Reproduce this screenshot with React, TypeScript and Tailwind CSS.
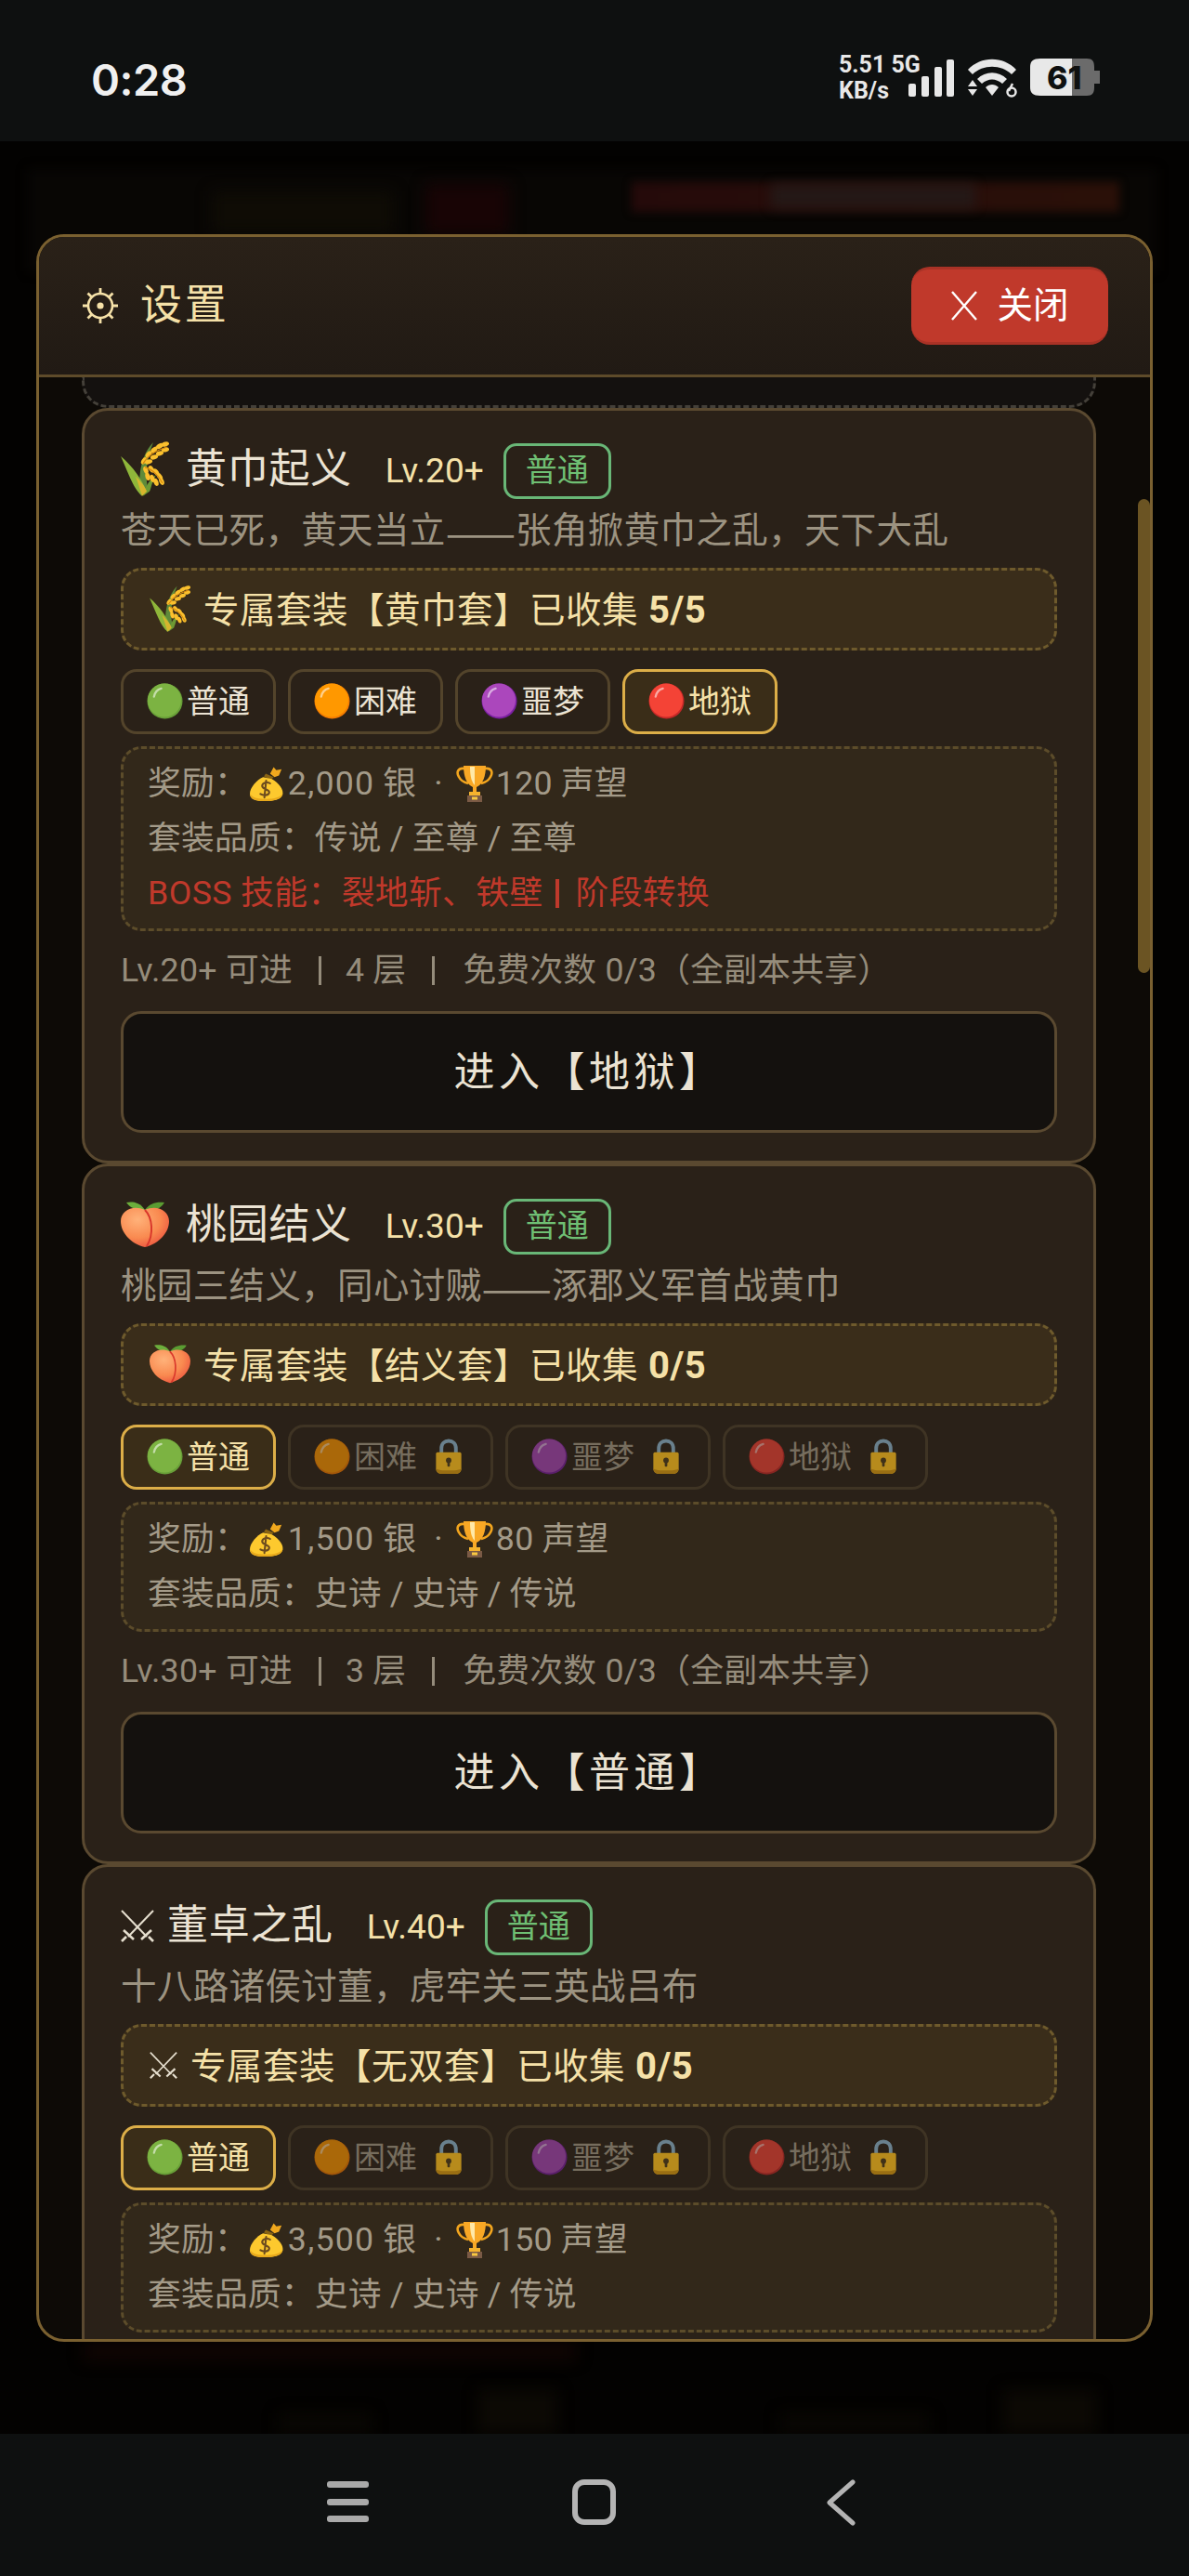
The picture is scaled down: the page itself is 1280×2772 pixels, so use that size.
import React from "react";

const FONT = "font-['Roboto','Noto_Sans_CJK_SC',sans-serif]";
const CJK = "font-['Noto_Sans_CJK_SC',sans-serif]";

function Ball({ fill, rim }: { fill: string; rim: string }) {
  return (
    <svg viewBox="0 0 40 40" className="inline-block w-[39px] h-[39px] shrink-0">
      <circle cx="20" cy="20" r="19.5" fill={rim} />
      <circle cx="19.5" cy="19" r="18.5" fill={fill} />
      <path d="M8 15 C9 10 12 7 16 6" stroke="#ffffff" strokeOpacity="0.55" strokeWidth="2.4" strokeLinecap="round" fill="none" />
    </svg>
  );
}

function Lock() {
  return (
    <svg viewBox="0 0 30 40" className="inline-block w-[30px] h-[39px] shrink-0">
      <path d="M7 18 V11 C7 5.5 10.5 2.5 15 2.5 C19.5 2.5 23 5.5 23 11 V18" fill="none" stroke="#84a9bf" strokeWidth="4" />
      <path d="M1 17 C1 15.5 2 15 3.5 15 H26.5 C28 15 29 15.5 29 17 V33 C29 37 26 39 22 39 H8 C4 39 1 37 1 33 Z" fill="#f3b91f" />
      <path d="M1 33 C1 37 4 39 8 39 H22 C26 39 29 37 29 33 C26 36 4 36 1 33 Z" fill="#c98f12" />
      <circle cx="15" cy="24" r="3" fill="#4a3a1a" />
      <rect x="13.6" y="24" width="2.8" height="7" rx="1" fill="#4a3a1a" />
    </svg>
  );
}

function Bag() {
  return (
    <svg viewBox="0 0 40 40" className="inline-block w-[38px] h-[40px] shrink-0">
      <path d="M24 9 L28 1.5 L31 5 L37 4 L34 11 L29 13 Z" fill="#f0a81e" />
      <path d="M19 9 L28 13 L25 16 L17 12 Z" fill="#8a6414" />
      <path d="M16 13 L26 15 C34 20 40 27 38 33 C36 39 28 40 18 40 C8 40 1 38 1 32 C1 25 9 16 16 13 Z" fill="#fdc92e" />
      <path d="M1.5 31 C3 37 12 37.5 20 37.5 C28 37.5 36 36 38.5 31 C38 38 28 40 18 40 C8 40 1 38 1.5 31 Z" fill="#e8a91b" />
      <path d="M24 20 C21 18 15 19 15 23 C15 27 23 26 23 30 C23 34 16 34 13 32 M19.5 17 L17.5 36" fill="none" stroke="#6d4c1e" strokeWidth="2.2" strokeLinecap="round" />
    </svg>
  );
}

function Trophy() {
  return (
    <svg viewBox="0 0 40 40" className="inline-block w-[40px] h-[40px] shrink-0">
      <path d="M9 4 C2 3 0 8 3 13 C5 17 9 19 13 20" fill="none" stroke="#f2a51e" strokeWidth="2.6" />
      <path d="M31 4 C38 3 40 8 37 13 C35 17 31 19 27 20" fill="none" stroke="#f2a51e" strokeWidth="2.6" />
      <path d="M8 1 H32 C32 12 29 21 22 24 H18 C11 21 8 12 8 1 Z" fill="#f9a825" />
      <path d="M15 2 H20 C20 10 20 17 20 22 C16 18 15 10 15 2 Z" fill="#ffe9a8" />
      <rect x="18" y="24" width="4" height="6" fill="#f9a825" />
      <rect x="14" y="29" width="12" height="4" fill="#f5b32e" />
      <rect x="12" y="33" width="16" height="7" fill="#7a5a45" />
      <rect x="17" y="34.5" width="6" height="3" fill="#f9c842" />
    </svg>
  );
}

const UPPER = [
  [25, 21, -55], [30, 14, -50], [36, 9, -40], [42, 5, -30], [48, 3, -15],
  [30, 22, -15], [36, 17, -15], [42, 13, -15], [48, 9, -10],
];
const LOWER = [
  [27, 31, 70], [33, 30, 55], [38, 33, 50], [42, 38, 55], [44, 43, 65],
  [29, 38, 75], [34, 40, 70], [38, 44, 70],
];

function Rice({ size }: { size: number }) {
  return (
    <svg viewBox="0 0 52 60" className="inline-block shrink-0" style={{ width: size, height: size * 1.15 }}>
      <path d="M22 59 C18 44 20 16 35 1 C28 18 26 36 29 50 Z" fill="#5f8a3a" />
      <path d="M24 59 C26 50 30 42 38 36 C33 45 33 50 31 54 Z" fill="#6d9a34" />
      <path d="M23 59 C14 52 8 34 0 16 C12 26 22 40 28 54 Z" fill="#8fb63a" />
      <path d="M23 59 C20 50 19 46 16 38 C20 42 26 48 28 54 Z" fill="#f0b429" opacity="0.75" />
      {UPPER.concat(LOWER).map((g, i) => (
        <ellipse key={i} cx={g[0]} cy={g[1]} rx="4.2" ry="2.5" transform={`rotate(${g[2]} ${g[0]} ${g[1]})`} fill="#fbc02d" />
      ))}
      <path d="M24 24 C30 14 38 10 50 6 M26 28 C34 30 40 36 45 45" stroke="#d68910" strokeWidth="1.2" fill="none" />
    </svg>
  );
}

function Peach({ size }: { size: number }) {
  return (
    <svg viewBox="0 0 52 52" className="inline-block shrink-0" style={{ width: size, height: size }}>
      <defs>
        <radialGradient id="pch" cx="0.35" cy="0.3" r="0.85">
          <stop offset="0" stopColor="#ffb27a" />
          <stop offset="0.55" stopColor="#f98a50" />
          <stop offset="1" stopColor="#e8443a" />
        </radialGradient>
      </defs>
      <path d="M26 10 C20 1 12 1 6 2 C10 8 18 11 26 10 Z" fill="#6cae3c" />
      <path d="M26 10 C31 3 38 1 47 2 C43 9 34 12 26 10 Z" fill="#5a9c32" />
      <path d="M26 50 C10 46 0 34 0 22 C0 10 14 4 26 10 C38 4 52 10 52 22 C52 34 42 46 26 50 Z" fill="url(#pch)" />
      <path d="M26 10 C34 18 36 36 28 49" stroke="#d9382c" strokeWidth="2" fill="none" />
    </svg>
  );
}

function Chip({ ball, rim, label, active, locked }: { ball: string; rim: string; label: string; active?: boolean; locked?: boolean }) {
  return (
    <div
      className={
        "h-[70px] flex items-center pl-[25px] pr-[25px] rounded-[17px] border-[3px] text-[34px] " +
        (active
          ? "bg-[#3a2d18] border-[#dcae48] text-[#f5e1a8]"
          : locked
            ? "border-[#3f3424] text-[#766d5e]"
            : "border-[#53442b] text-[#ebe3d3]")
      }
    >
      <span className={locked ? "flex items-center opacity-60" : "flex items-center"}>
        <Ball fill={ball} rim={rim} />
      </span>
      <span className="ml-[4px] pt-[2px]">{label}</span>
      {locked && (
        <span className="flex items-center ml-[19px] mr-[5px] opacity-70">
          <Lock />
        </span>
      )}
    </div>
  );
}

const LEVELS = [
  { ball: "#7cb342", rim: "#689f38", label: "普通" },
  { ball: "#ff9800", rim: "#f57c00", label: "困难" },
  { ball: "#ab47bc", rim: "#7b1fa2", label: "噩梦" },
  { ball: "#f44336", rim: "#c62828", label: "地狱" },
];

function Divider({ ml, mr, color }: { ml: string; mr: string; color: string }) {
  return <span className={"w-[3px] h-[31px] " + color + " " + ml + " " + mr} />;
}

type CardProps = {
  icon: React.ReactNode;
  setIcon: React.ReactNode;
  name: string;
  lv: string;
  desc: React.ReactNode;
  setName: string;
  got: string;
  active: number;
  lockAfter: boolean;
  silver: string;
  fame: string;
  quality: string;
  boss?: [string, string];
  floors?: string;
  enter?: string;
  titleGap: string;
};

function Card(p: CardProps) {
  return (
    <div className="border-[3px] border-[#5a4930] rounded-[28px] bg-[#2a2118] px-[39px] pt-[35px] pb-[30px]">
      <div className="h-[60px] flex items-center">
        <span className="flex items-center mb-[4px]">{p.icon}</span>
        <span className={"mb-[4px] text-[44px] tracking-[0.7px] text-[#ebe3d3] " + p.titleGap}>{p.name}</span>
        <span className="ml-[36px] text-[37px] text-[#f5e1a8]">{p.lv}</span>
        <span className="ml-[21px] h-[60px] flex items-center px-[21px] rounded-[14px] border-[3px] border-[#69b777] text-[34px] text-[#6fbf73]">普通</span>
      </div>
      <div className="mt-[4px] h-[58px] pt-[3px] flex items-center text-[38.5px] tracking-[0.35px] text-[#9c9381] whitespace-nowrap">{p.desc}</div>
      <div className="mt-[12px] h-[89px] flex items-center pl-[28px] rounded-[22px] border-[3px] border-dashed border-[#6e5a2c] bg-[#3a2d1a] text-[38.5px] tracking-[0.5px] text-[#f5e1a8] whitespace-nowrap">
        {p.setIcon}
        <span className="ml-[14px] pt-[3px]">专属套装【{p.setName}】已收集</span>
        <span className="ml-[11px] pt-[3px] text-[40px] font-bold">{p.got}</span>
      </div>
      <div className="mt-[20px] flex gap-[13px]">
        {LEVELS.map((l, i) => (
          <Chip key={l.label} ball={l.ball} rim={l.rim} label={l.label} active={i === p.active} locked={p.lockAfter && i > 0} />
        ))}
      </div>
      <div className="mt-[13px] rounded-[22px] border-[3px] border-dashed border-[#5c4c2a] bg-[#32281a] px-[26px] py-[8px] text-[35.75px] tracking-[0.2px] text-[#a39a88] leading-[59px]">
        <div className="flex items-center h-[59px] whitespace-pre">
          奖励：
          <span className="ml-[1px] mr-[4px] flex"><Bag /></span>
          <span className="tracking-[1.2px]">{p.silver}</span>
          <span> 银</span>
          <span className="ml-[19px] mr-[14px]">·</span>
          <span className="mr-[3px] flex"><Trophy /></span>
          <span>{p.fame} 声望</span>
        </div>
        <div className="h-[59px] whitespace-pre">套装品质：{p.quality}</div>
        {p.boss && (
          <div className="flex items-center h-[59px] whitespace-pre tracking-[0.4px] text-[#c0392b]">
            <span>{p.boss[0]}</span>
            <span className="w-[4px] h-[31px] ml-[13px] mr-[18px] bg-[#c0392b]" />
            <span>{p.boss[1]}</span>
          </div>
        )}
      </div>
      {p.floors && (
        <>
          <div className="mt-[13px] h-[58px] pt-[2px] flex items-center text-[35.75px] tracking-[0.25px] text-[#958c7b] whitespace-pre">
            <span>{p.lv} 可进</span>
            <Divider ml="ml-[28px]" mr="mr-[26px]" color="bg-[#958c7b]" />
            <span>{p.floors} 层</span>
            <Divider ml="ml-[28px]" mr="mr-[30px]" color="bg-[#958c7b]" />
            <span>免费次数 0/3（全副本共享）</span>
          </div>
          <div className="mt-[15px] h-[131px] pt-[2px] flex items-center justify-center rounded-[22px] border-[3px] border-[#5a4930] bg-[#14110e] text-[44px] tracking-[4.5px] text-[#ebe3d3]">
            {p.enter}
          </div>
        </>
      )}
    </div>
  );
}

function Sword({ size }: { size: number }) {
  return (
    <svg viewBox="0 0 36 36" className="inline-block shrink-0" style={{ width: size, height: size }} fill="none" stroke="#e6dfcf" strokeWidth="2">
      <path d="M1 2 L28 30" />
      <path d="M35 2 L8 30" />
      <path d="M22 33 L33 23" strokeWidth="2.6" />
      <path d="M14 33 L3 23" strokeWidth="2.6" />
      <path d="M30 30 L35 35" strokeWidth="2.6" />
      <path d="M6 30 L1 35" strokeWidth="2.6" />
    </svg>
  );
}

export default function App() {
  return (
    <div className={"w-[1280px] h-[2772px] flex flex-col bg-black overflow-hidden " + FONT}>
      {/* status bar */}
      <div className="h-[152px] shrink-0 bg-[#0e1010] flex items-center justify-between pl-[98px] pr-[82px] pt-[20px]">
        <span className="text-[47px] font-semibold text-[#f0f0f0] font-['Inter'] tracking-[-0.5px]">0:28</span>
        <div className="flex items-center mt-[-4px]">
          <div className="w-[75px] text-[25px] leading-[28px] font-bold text-[#e8e8e8] whitespace-nowrap">
            <div>5.51 5G</div>
            <div>KB/s</div>
          </div>
          <svg viewBox="0 0 220 44" className="w-[220px] h-[44px]">
            <g fill="#e8e8e8">
              <rect x="0" y="28" width="8" height="14" rx="2" />
              <rect x="14" y="20" width="8" height="22" rx="2" />
              <rect x="28" y="10" width="8" height="32" rx="2" />
              <rect x="41" y="2" width="8" height="40" rx="2" />
              <path d="M64 13 C78 -2 102 -2 116 13 L111 18 C100 7 80 7 69 18 Z" />
              <path d="M74 23 C83 14 97 14 106 23 L101 28 C94 22 86 22 79 28 Z" />
              <path d="M83 32 C87 28 93 28 97 32 L90 41 Z" />
              <path d="M69 24 L64 31 H74 Z" />
              <path d="M64 34 L74 34 L69 41 Z" />
              <circle cx="111" cy="37" r="4.5" fill="none" stroke="#e8e8e8" strokeWidth="2.5" />
              <path d="M108 36 L112 28" stroke="#e8e8e8" strokeWidth="2.5" />
            </g>
            <path d="M176 1 H142 C134 1 131 4 131 10 V32 C131 38 134 41 142 41 H176 Z" fill="#e8e8e8" />
            <path d="M176 1 H192 C198 1 200 4 200 10 V14 H206 V28 H200 V32 C200 38 198 41 192 41 H176 Z" fill="#6b6b6b" />
            <text x="149" y="34" fontSize="34" fontWeight="800" fill="#0e1010" fontFamily="Inter, sans-serif">61</text>
          </svg>
        </div>
      </div>

      {/* page behind overlay */}
      <div className="flex-1 relative bg-[#030201] overflow-hidden">
        <div className="absolute left-[30px] top-[30px] w-[1215px] h-[110px] bg-[#080604] blur-[6px]" />
        <div className="absolute left-[680px] top-[44px] w-[525px] h-[32px] bg-gradient-to-r from-[#250a0a] to-[#2a1008] blur-[5px]" />
        <div className="absolute left-[830px] top-[46px] w-[220px] h-[26px] bg-[#241816] blur-[6px]" />
        <div className="absolute left-[228px] top-[54px] w-[195px] h-[44px] bg-[#0f0c05] blur-[8px]" />
        <div className="absolute left-[458px] top-[46px] w-[90px] h-[54px] bg-[#180405] blur-[8px]" />
        <div className="absolute left-[90px] top-[2368px] w-[530px] h-[20px] bg-[#100503] blur-[8px]" />
        <div className="absolute left-[515px] top-[2420px] w-[85px] h-[47px] bg-[#0c0904] blur-[8px]" />
        <div className="absolute left-[1080px] top-[2420px] w-[100px] h-[47px] bg-[#0c0904] blur-[8px]" />
        <div className="absolute left-[300px] top-[2445px] w-[100px] h-[22px] bg-[#090703] blur-[8px]" />
        <div className="absolute left-[840px] top-[2445px] w-[160px] h-[22px] bg-[#090703] blur-[8px]" />

        {/* modal */}
        <div className="absolute inset-0 flex items-center justify-center">
          <div className="relative w-[1202px] h-[2268px] rounded-[30px] border-[3px] border-[#7a6030] bg-[#0d0a06] overflow-hidden flex flex-col">
            <div className="h-[151px] shrink-0 flex items-center justify-between pl-[47px] pr-[45px] bg-gradient-to-b from-[#2a2118] to-[#211a14] border-b-[3px] border-[#5e4b2a]">
              <div className="flex items-center text-[#f5e1a8]">
                <svg viewBox="0 0 38 38" className="w-[38px] h-[38px]" fill="none" stroke="#f5e1a8">
                  <circle cx="19" cy="19" r="13" strokeWidth="2.6" />
                  <circle cx="19" cy="19" r="3.6" fill="#f5e1a8" stroke="none" />
                  <path d="M19 0 V6 M19 32 V38 M0 19 H6 M32 19 H38 M5.5 5.5 L9.8 9.8 M28.2 28.2 L32.5 32.5 M32.5 5.5 L28.2 9.8 M9.8 28.2 L5.5 32.5" strokeWidth="2.8" />
                </svg>
                <span className="ml-[24px] text-[45px] tracking-[2.75px]">设置</span>
              </div>
              <div className="w-[212px] h-[84px] flex items-center justify-center rounded-[20px] bg-[#c0392b] border-b-[3px] border-t-[3px] border-[#a93226] text-white text-[38.5px]">
                <svg viewBox="0 0 30 34" className="w-[30px] h-[34px] mr-[20px]" fill="none" stroke="#fff" strokeWidth="2.4">
                  <path d="M2 2 L28 32 M28 2 L2 32" />
                </svg>
                关闭
              </div>
            </div>

            <div className="flex-1 overflow-hidden pl-[46px] pr-[58px]">
              <div className="h-[33px] rounded-b-[28px] border-[3px] border-t-0 border-dashed border-[#444039] bg-[#14110f]" />
              <Card
                icon={<Rice size={52} />}
                setIcon={<Rice size={44} />}
                name="黄巾起义"
                lv="Lv.20+"
                desc={<>苍天已死，黄天当立<span className={CJK + " text-[45px] tracking-normal"}>——</span>张角掀黄巾之乱，天下大乱</>}
                setName="黄巾套"
                got="5/5"
                active={3}
                lockAfter={false}
                silver="2,000"
                fame="120"
                quality="传说 / 至尊 / 至尊"
                boss={["BOSS 技能：裂地斩、铁壁", "阶段转换"]}
                floors="4"
                enter="进入【地狱】"
                titleGap="ml-[18px]"
              />
              <Card
                icon={<Peach size={52} />}
                setIcon={<Peach size={44} />}
                name="桃园结义"
                lv="Lv.30+"
                desc={<>桃园三结义，同心讨贼<span className={CJK + " text-[45px] tracking-normal"}>——</span>涿郡义军首战黄巾</>}
                setName="结义套"
                got="0/5"
                active={0}
                lockAfter
                silver="1,500"
                fame="80"
                quality="史诗 / 史诗 / 传说"
                floors="3"
                enter="进入【普通】"
                titleGap="ml-[18px]"
              />
              <Card
                icon={<Sword size={36} />}
                setIcon={<Sword size={30} />}
                name="董卓之乱"
                lv="Lv.40+"
                desc="十八路诸侯讨董，虎牢关三英战吕布"
                setName="无双套"
                got="0/5"
                active={0}
                lockAfter
                silver="3,500"
                fame="150"
                quality="史诗 / 史诗 / 传说"
                titleGap="ml-[14px]"
              />
            </div>

            <div className="absolute right-0 top-[282px] w-[13px] h-[510px] rounded-full bg-[#6b5423]" />
          </div>
        </div>
      </div>

      {/* nav bar */}
      <div className="h-[153px] shrink-0 bg-[#0e1010] flex items-center justify-center pb-[6px]">
        <svg viewBox="0 0 570 50" className="w-[570px] h-[50px] ml-[-6px]">
          <g fill="#a9a9a9">
            <rect x="0" y="2" width="45" height="7" rx="3" />
            <rect x="0" y="21" width="45" height="7" rx="3" />
            <rect x="0" y="39" width="45" height="7" rx="3" />
          </g>
          <rect x="267" y="3" width="41" height="43" rx="10" fill="none" stroke="#b4b4b4" strokeWidth="6" />
          <path d="M566 3 L541 25 L566 47" fill="none" stroke="#b4b4b4" strokeWidth="5" strokeLinecap="round" strokeLinejoin="round" />
        </svg>
      </div>
    </div>
  );
}
